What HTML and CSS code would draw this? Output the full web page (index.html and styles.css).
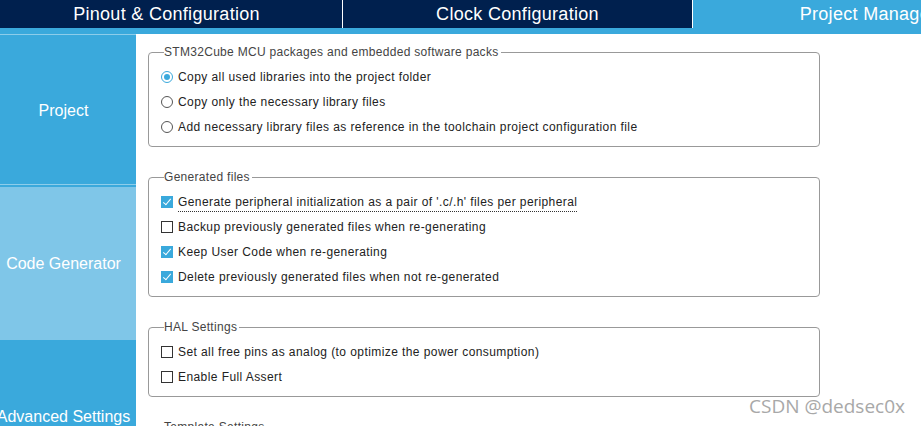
FILE: index.html
```html
<!DOCTYPE html>
<html lang="en">
<head>
    <meta charset="UTF-8">
    <title>Project Manager</title>
    <link rel="stylesheet" href="styles.css">
</head>
<body>
    <!-- Top tabs -->
    <nav class="tabs">
        <div class="tab">Pinout &amp; Configuration</div>
        <div class="tab">Clock Configuration</div>
        <div class="tab active">Project Manager</div>
    </nav>
    <div class="band"></div>

    <div class="layout">
        <!-- Left menu -->
        <aside class="sidebar">
            <div class="nav-item first">Project</div>
            <div class="nav-item current">Code Generator</div>
            <div class="nav-item">Advanced Settings</div>
        </aside>

        <main class="content">
            <fieldset class="group">
                <legend>STM32Cube MCU packages and embedded software packs</legend>
                <label class="row"><span class="radio on"></span>Copy all used libraries into the project folder</label>
                <label class="row"><span class="radio"></span>Copy only the necessary library files</label>
                <label class="row"><span class="radio"></span>Add necessary library files as reference in the toolchain project configuration file</label>
            </fieldset>

            <fieldset class="group">
                <legend>Generated files</legend>
                <label class="row"><span class="check on"></span><span class="focus">Generate peripheral initialization as a pair of '.c/.h' files per peripheral</span></label>
                <label class="row"><span class="check"></span>Backup previously generated files when re-generating</label>
                <label class="row"><span class="check on"></span>Keep User Code when re-generating</label>
                <label class="row"><span class="check on"></span>Delete previously generated files when not re-generated</label>
            </fieldset>

            <fieldset class="group">
                <legend>HAL Settings</legend>
                <label class="row"><span class="check"></span>Set all free pins as analog (to optimize the power consumption)</label>
                <label class="row"><span class="check"></span>Enable Full Assert</label>
            </fieldset>

            <fieldset class="group">
                <legend>Template Settings</legend>
            </fieldset>
        </main>
    </div>

    <div class="watermark">CSDN @dedsec0x</div>
</body>
</html>
```

FILE: styles.css
```css
* {
    margin: 0;
    padding: 0;
    box-sizing: border-box;
}

body {
    width: 921px;
    height: 426px;
    overflow: hidden;
    background: #fff;
    font-family: 'Liberation Sans', Arial, sans-serif;
    color: #222;
    position: relative;
}

/* Top tabs */
.tabs {
    display: flex;
    height: 28px;
    background-color: #00204e;
    white-space: nowrap;
    overflow: hidden;
}

.tab {
    flex: 0 0 auto;
    width: 343px;
    color: #fff;
    font-size: 18px;
    letter-spacing: 0.3px;
    line-height: 28px;
    text-align: center;
    border-right: 1px solid #fff;
}

.tab:first-child {
    padding-right: 9px;
}

.tab:nth-child(2) {
    width: 350px;
}

.tab.active {
    width: 350px;
    background-color: #3aa9dc;
    border-right: none;
}

.band {
    height: 6px;
    background-color: #3aa9dc;
}

.layout {
    display: flex;
    align-items: flex-start;
}

/* Left menu */
.sidebar {
    flex: 0 0 136px;
    width: 136px;
    background-color: #3aa9dc;
    overflow: hidden;
}

.nav-item {
    height: 153px;
    display: flex;
    align-items: center;
    justify-content: center;
    padding-right: 9px;
    color: #fff;
    font-size: 16px;
    white-space: nowrap;
}

.nav-item.first {
    box-shadow: inset 0 1px #8dcdea, inset 0 -2px #3aa9dc, inset 0 -3px #8dcdea;
}

.nav-item.current {
    background-color: #7fc6e8;
}

/* Settings groups */
.content {
    flex: 1;
    padding: 11px 0 0 12px;
}

.group {
    width: 672px;
    border: 1px solid #999;
    border-radius: 4px;
    padding: 5px 0 7px 12px;
    margin-bottom: 23px;
    font-size: 12px;
}

.group legend {
    margin-left: 3px;
    padding: 0 2px 0 0;
    color: #444;
    line-height: 14px;
    letter-spacing: 0.3px;
}

.row {
    display: flex;
    align-items: center;
    height: 25px;
    letter-spacing: 0.42px;
    white-space: nowrap;
}

.radio,
.check {
    flex: 0 0 12px;
    width: 12px;
    height: 12px;
    margin-right: 5px;
    position: relative;
}

.radio {
    border: 1px solid #555;
    border-radius: 50%;
}

.radio.on {
    border-color: #3aa9dc;
}

.radio.on::after {
    content: "";
    position: absolute;
    left: 2px;
    top: 2px;
    width: 6px;
    height: 6px;
    border-radius: 50%;
    background-color: #3aa9dc;
}

.check {
    border: 1px solid #333;
    background: #fff;
}

.check.on {
    border-color: #3aa9dc;
    background-color: #3aa9dc;
}

.check.on::after {
    content: "";
    position: absolute;
    left: 3px;
    top: 0px;
    width: 3px;
    height: 7px;
    border: solid #fff;
    border-width: 0 1.5px 1.5px 0;
    transform: rotate(40deg);
}

.focus {
    border-bottom: 1px dotted #333;
    padding-bottom: 2px;
    margin-bottom: -4px;
}

.watermark {
    position: absolute;
    right: 16px;
    bottom: 7px;
    font-family: 'Open Sans', sans-serif;
    font-size: 19px;
    color: #a8a8a8;
}
```
